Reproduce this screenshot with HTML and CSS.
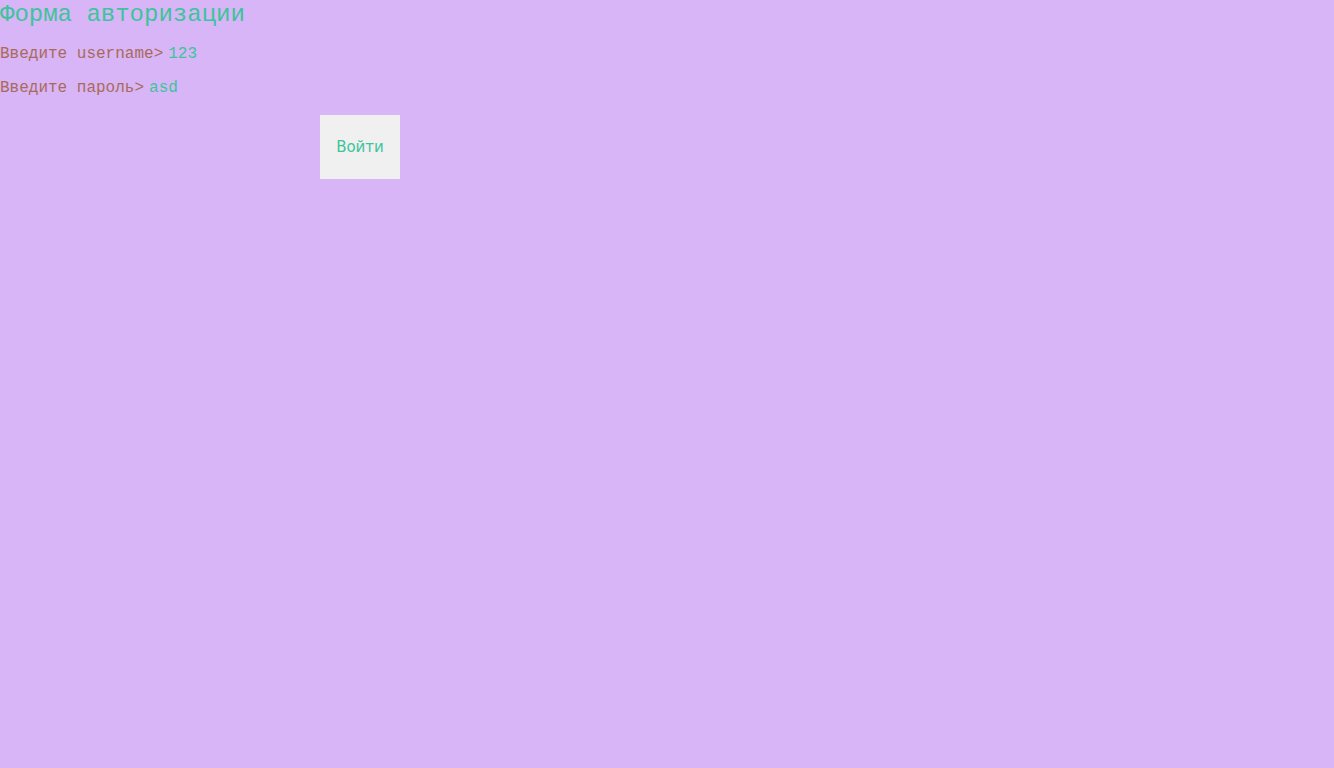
FILE: index.html
```html
<!DOCTYPE html>
<html lang="ru">
<head>
<meta charset="utf-8">
<title>Форма авторизации</title>
<link rel="stylesheet" href="styles.css">
</head>
<body>
<form class="auth">
  <h1 class="title">Форма авторизации</h1>
  <div class="row"><label class="label" for="u">Введите username&gt;</label><input class="field" id="u" type="text" value="123"></div>
  <div class="row"><label class="label" for="p">Введите пароль&gt;</label><input class="field" id="p" type="text" value="asd"></div>
  <button class="btn" type="button">Войти</button>
</form>
</body>
</html>
```
FILE: styles.css
```css
html, body {
  margin: 0;
  padding: 0;
  background: #d8b5f6;
  height: 100%;
}
.auth {
  display: flex;
  flex-direction: column;
  align-items: flex-start;
  font-family: "Liberation Mono", monospace;
}
.title {
  margin: 0;
  font-size: 24px;
  font-weight: normal;
  line-height: 30px;
  color: #3cc49c;
}
.row {
  display: flex;
  align-items: center;
  margin-top: 12px;
  height: 24px;
}
.row + .row {
  margin-top: 10px;
}
.label {
  font-size: 16px;
  color: #a86a5a;
}
.field {
  border: none;
  background: transparent;
  outline: none;
  padding: 0;
  margin-left: 5px;
  font-family: "Liberation Mono", monospace;
  font-size: 16px;
  color: #3cc49c;
  width: 150px;
}
.btn {
  margin: 15px 0 0 320px;
  width: 80px;
  height: 64px;
  border: none;
  background: #f0f0f0;
  color: #3cc49c;
  font-family: "DejaVu Sans", sans-serif;
  font-size: 15px;
  padding: 0;
}
```
